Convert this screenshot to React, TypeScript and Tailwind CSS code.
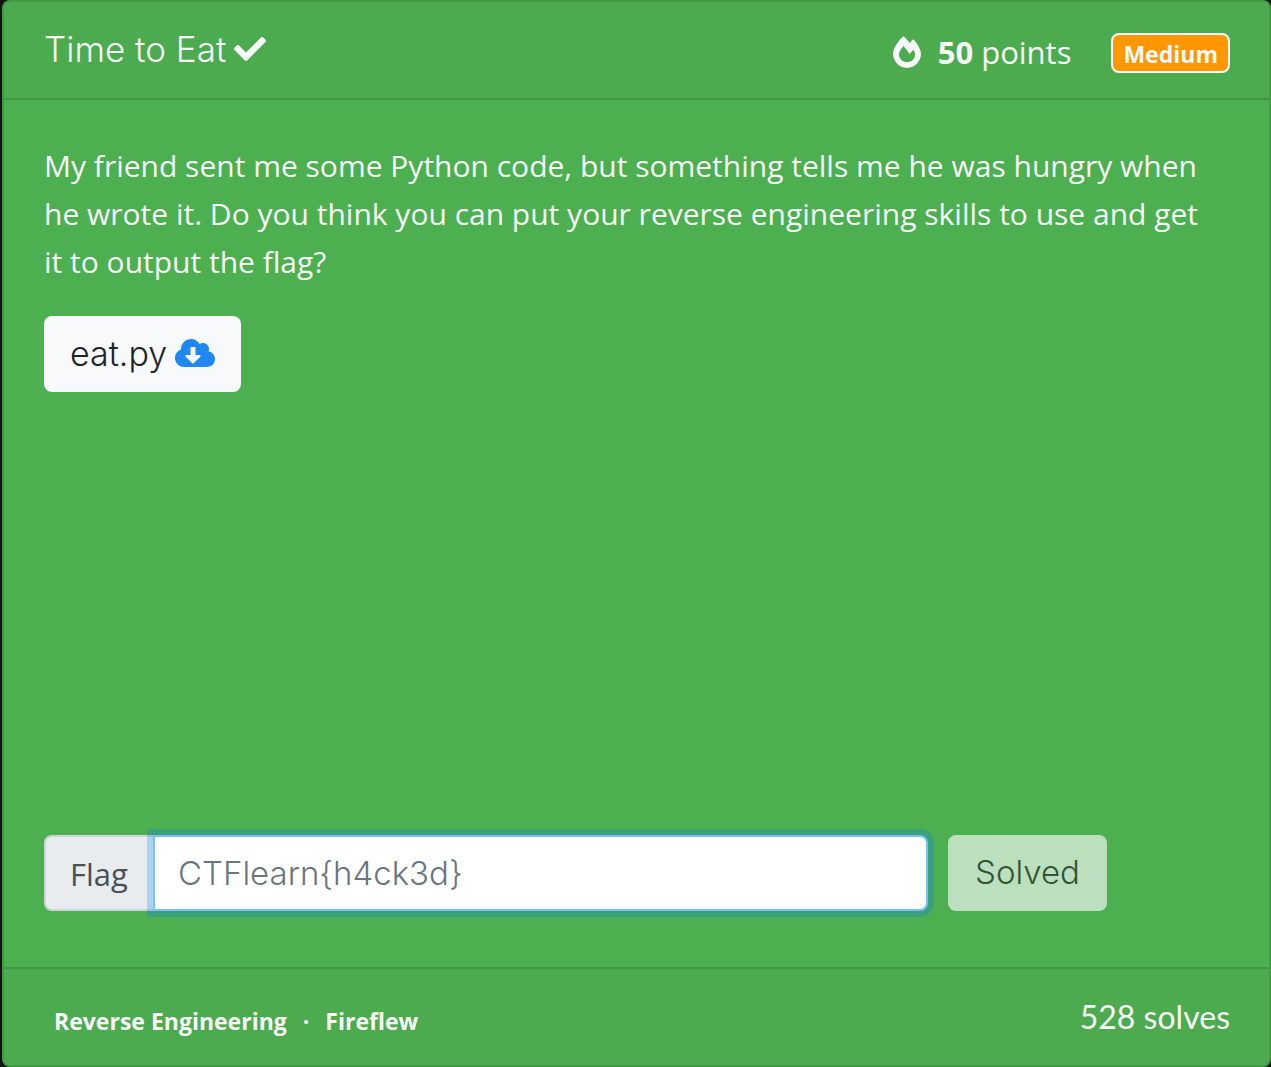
import { useState } from 'react';
import { FaCheck, FaCloudDownloadAlt, FaFireAlt } from 'react-icons/fa';

function CardHeader() {
  return (
    <header className="flex h-[98px] shrink-0 items-center justify-between border-b-2 border-black/[0.125] bg-[#4cab4e] pl-10 pr-[39px]">
      <h1 className="flex items-center gap-2 pb-0.5 font-['Inter',sans-serif] text-[35px] font-light leading-10">
        Time to Eat
        <FaCheck className="size-8" aria-label="Solved" />
      </h1>
      <div className="flex items-center pt-1 text-[31px] leading-10">
        <FaFireAlt className="mr-4 h-8 w-[30px]" aria-hidden="true" />
        <p className="mr-10">
          <strong className="font-bold">50</strong> points
        </p>
        <span className="mt-0.5 flex h-10 items-center rounded-lg border-2 border-[#f8f9fa] bg-[#ff9800] px-2.5 pt-0.5 text-[23px] font-bold">
          Medium
        </span>
      </div>
    </header>
  );
}

function FlagForm() {
  const [flag, setFlag] = useState('');
  return (
    <form className="flex items-stretch" onSubmit={(event) => event.preventDefault()}>
      <div className="flex h-[76px] w-[884px] min-w-0">
        <label
          htmlFor="flag"
          className="flex w-[110px] shrink-0 items-center rounded-l-lg border-2 border-r-0 border-[#ced4da] bg-[#e9ecef] pl-6 pt-0.5 text-[31px] text-[#495057]"
        >
          Flag
        </label>
        <input
          id="flag"
          value={flag}
          onChange={(event) => setFlag(event.target.value)}
          placeholder="CTFlearn{h4ck3d}"
          className="relative -ml-px min-w-0 flex-1 rounded-r-lg border-2 border-[#80bdff] bg-white px-[23px] pt-0.5 font-['Inter',sans-serif] text-[33px] font-light text-[#495057] shadow-[0_0_0_6px_rgba(0,123,255,0.25)] outline-none placeholder:text-[#6c757d]"
        />
      </div>
      <button
        type="submit"
        disabled
        className="ml-5 w-[159px] rounded-lg bg-[#f8f9fa] font-['Inter',sans-serif] text-[33px] font-light text-[#212529] opacity-65"
      >
        Solved
      </button>
    </form>
  );
}

function CardFooter() {
  return (
    <footer className="flex h-[98px] shrink-0 items-center justify-between border-t-2 border-black/[0.125] bg-[#4cab4e] pl-10 pr-[39px]">
      <p className="mt-2 flex items-center gap-4 pl-2.5 text-[23px] font-bold leading-10">
        <a href="#category">Reverse Engineering</a>
        <span>·</span>
        <a href="#author">Fireflew</a>
      </p>
      <p className="font-['Lato',sans-serif] text-[32px] leading-10">528 solves</p>
    </footer>
  );
}

export default function App() {
  return (
    <div className="flex min-h-screen bg-[#111511] pl-0.5 font-['Open_Sans',sans-serif] text-[#f8f9fa]">
      <main className="flex flex-1 flex-col overflow-hidden rounded-lg border-2 border-black/[0.125] bg-[#4caf50]">
        <CardHeader />
        <section className="flex flex-1 flex-col items-start justify-between px-10 pb-14 pt-[42px]">
          <div>
            <p className="pr-2 text-[30px] leading-[48px]">
              My friend sent me some Python code, but something tells me he was hungry when he wrote it. Do you think
              you can put your reverse engineering skills to use and get it to output the flag?
            </p>
            <a
              href="#eat.py"
              className="mt-[30px] inline-flex h-[76px] items-center gap-2 rounded-lg bg-[#f8f9fa] px-[26px] pb-0.5 font-['Inter',sans-serif] text-[34px] font-light text-[#212529]"
            >
              eat.py
              <FaCloudDownloadAlt className="h-8 w-10 text-[#2188f3]" aria-hidden="true" />
            </a>
          </div>
          <FlagForm />
        </section>
        <CardFooter />
      </main>
    </div>
  );
}
